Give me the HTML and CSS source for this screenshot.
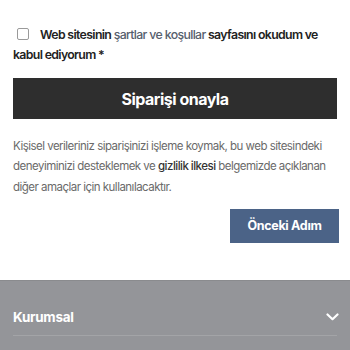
FILE: index.html
```html
<!DOCTYPE html>
<html lang="tr">
<head>
<meta charset="utf-8">
<link rel="stylesheet" href="styles.css">
</head>
<body>
<main class="page">
  <label class="terms">
    <span class="checkbox"></span><span class="terms-text">Web sitesinin <a class="terms-link">şartlar ve koşullar</a> sayfasını okudum ve kabul ediyorum *</span>
  </label>
  <button class="confirm">Siparişi onayla</button>
  <p class="privacy">Kişisel verileriniz siparişinizi işleme koymak, bu web sitesindeki deneyiminizi desteklemek ve <a class="privacy-link">gizlilik ilkesi</a> belgemizde açıklanan diğer amaçlar için kullanılacaktır.</p>
  <div class="actions">
    <button class="prev">Önceki Adım</button>
  </div>
</main>
<footer class="footer">
  <div class="acc-row">
    <span class="acc-title">Kurumsal</span>
    <svg class="chevron" width="13" height="8" viewBox="0 0 13 8"><path d="M1.5 1.5 L6.5 6.2 L11.5 1.5" fill="none" stroke="#ffffff" stroke-width="2.2" stroke-linecap="round" stroke-linejoin="round"/></svg>
  </div>
</footer>
</body>
</html>
```
FILE: styles.css
```css
* { box-sizing: border-box; }
html, body { margin: 0; padding: 0; background: #ffffff; }
body {
  font-family: Inter, "Liberation Sans", sans-serif;
  width: 350px;
  height: 350px;
  overflow: hidden;
}
.page {
  padding: 25px 13px 0 13px;
  height: 280px;
}
.terms {
  display: block;
  font-size: 12.3px;
  line-height: 20px;
  font-weight: 600;
  color: #222222;
  letter-spacing: -0.65px;
}
.checkbox {
  display: inline-block;
  width: 12px;
  height: 12px;
  border: 1px solid #9a9a9a;
  border-radius: 2px;
  margin: 0 11px 0 4px;
  vertical-align: -1px;
  background: #fff;
}
.terms-link {
  color: #56606d;
  font-weight: 500;
}
.confirm {
  display: block;
  width: 324px;
  height: 41px;
  margin-top: 13px;
  border: 0;
  background: #2e2e2e;
  color: #ffffff;
  font-family: inherit;
  font-size: 16px;
  font-weight: 700;
  letter-spacing: -0.5px;
}
.privacy {
  margin: 17px 0 0 0;
  font-size: 11.5px;
  line-height: 20.3px;
  color: #6a6a6a;
  letter-spacing: -0.52px;
}
.privacy-link {
  color: #333333;
  font-weight: 500;
}
.actions {
  display: flex;
  justify-content: flex-end;
  margin-top: 12px;
}
.prev {
  width: 109px;
  height: 34px;
  margin-right: -2px;
  border: 0;
  background: #4b6387;
  color: #ffffff;
  font-family: inherit;
  font-size: 12.5px;
  font-weight: 700;
  letter-spacing: -0.3px;
}
.footer {
  height: 70px;
  background: #949599;
  border-top: 1px solid #8a8b8e;
  padding: 0 13px;
}
.acc-row {
  display: flex;
  justify-content: space-between;
  align-items: center;
  height: 55px;
  padding-top: 17px;
  border-bottom: 1px solid #a3a4a7;
}
.acc-title {
  color: #ffffff;
  font-size: 13.5px;
  font-weight: 700;
  letter-spacing: -0.3px;
}
.chevron { margin-right: -2px; }
```
